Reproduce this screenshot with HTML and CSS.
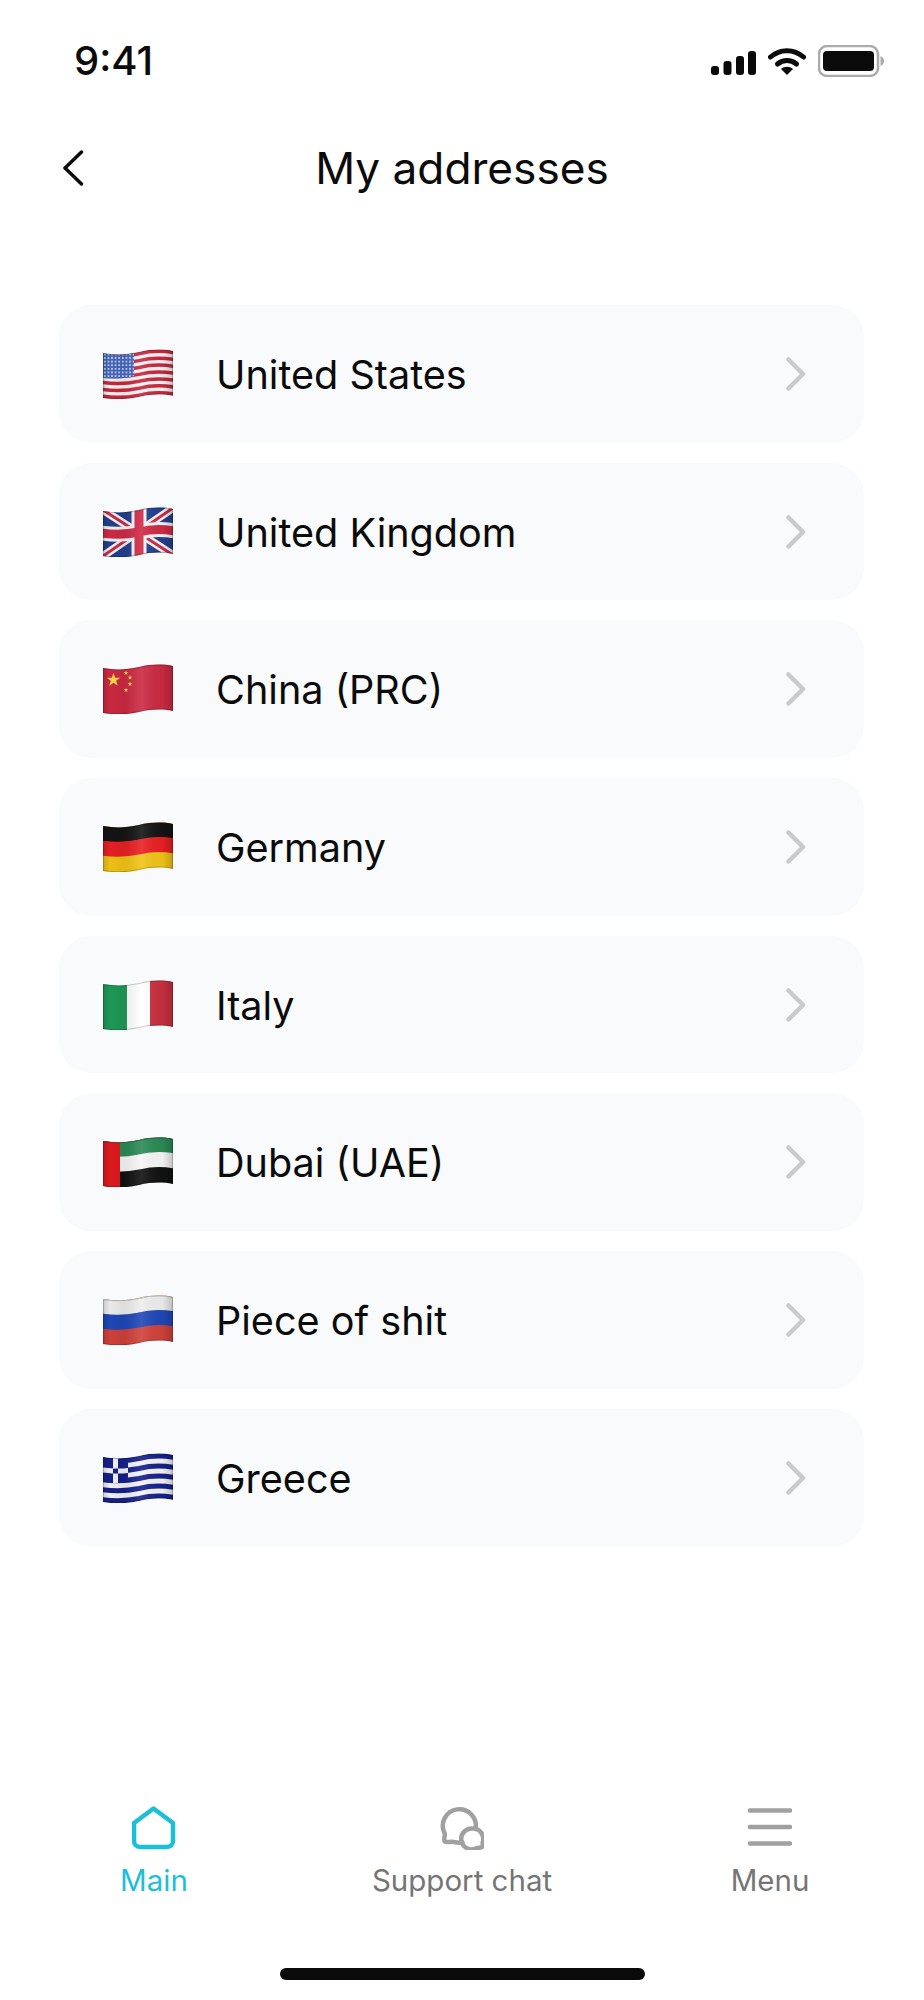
FILE: index.html
```html
<!DOCTYPE html>
<html lang="en">
<head>
  <meta charset="UTF-8">
  <title>My addresses</title>
  <link rel="stylesheet" href="styles.css">
</head>
<body>
  <!-- shared flag pieces -->
  <svg class="defs" aria-hidden="true">
    <defs>
      <clipPath id="flag-shape">
        <path d="M0 4 C12 6 22 6 36 3 C48 0 60 0 70 2 V47 C60 45 48 45 36 48 C22 51 12 51 0 49 Z"/>
      </clipPath>
      <path id="wave" fill="none" d="M-2 4 C12 6 22 6 36 3 C48 0 60 0 72 2"/>
      <path id="edge" fill="none" stroke="#000" stroke-opacity=".2" stroke-width="2" d="M0 4 C12 6 22 6 36 3 C48 0 60 0 70 2 V47 C60 45 48 45 36 48 C22 51 12 51 0 49 Z"/>
      <path id="star" d="M0 -1 L.24 -.31 .95 -.31 .38 .12 .59 .81 0 .4 -.59 .81 -.38 .12 -.95 -.31 -.24 -.31 Z"/>
      <linearGradient id="sheen" x1="0" x2="1" y1="0" y2="0">
        <stop offset="0" stop-color="#000" stop-opacity=".16"/>
        <stop offset=".1" stop-color="#000" stop-opacity=".02"/>
        <stop offset=".3" stop-color="#000" stop-opacity=".07"/>
        <stop offset=".55" stop-color="#fff" stop-opacity=".1"/>
        <stop offset=".85" stop-color="#000" stop-opacity=".03"/>
        <stop offset="1" stop-color="#000" stop-opacity=".2"/>
      </linearGradient>
      <pattern id="us-stars" width="3.600" height="3.600" patternUnits="userSpaceOnUse">
        <circle cx="1.800" cy="1.800" r=".8" fill="#fff"/>
      </pattern>
    </defs>
  </svg>

  <div class="status-bar">
    <span class="time">9:41</span>
    <div class="status-icons">
      <svg class="signal" viewBox="0 0 45 24">
        <rect x="0" y="15" width="8" height="9" rx="3"/>
        <rect x="12.5" y="10" width="8" height="14" rx="3"/>
        <rect x="25" y="5" width="8" height="19" rx="3"/>
        <rect x="37" y="0" width="8" height="24" rx="3"/>
      </svg>
      <svg class="wifi" viewBox="0 0 38 28">
        <path d="M2.5 10 C12 1.5 26 1.5 35.5 10" fill="none" stroke="#0a0a0a" stroke-width="5" stroke-linecap="round"/>
        <path d="M9.5 17 C15 12.2 23 12.2 28.5 17" fill="none" stroke="#0a0a0a" stroke-width="5" stroke-linecap="round"/>
        <path d="M13 22 C16.5 19 21.5 19 25 22 L19 28 Z"/>
      </svg>
      <svg class="battery" viewBox="0 0 66 32">
        <rect x="1" y="1" width="59" height="30" rx="8" fill="none" stroke="#ababab" stroke-width="2.5"/>
        <rect x="5" y="6" width="51" height="20" rx="4"/>
        <path d="M62.500 11 C65 12 66 14 66 16 C66 18 65 20 62.500 21 Z" fill="#ababab"/>
      </svg>
    </div>
  </div>

  <header class="nav">
    <svg class="back" viewBox="0 0 22 36">
      <path d="M19.500 2 L3 18 L19.500 34"/>
    </svg>
    <h1>My addresses</h1>
  </header>

  <main class="list">
    <a class="row">
      <svg class="flag" viewBox="0 0 70 50">
        <g clip-path="url(#flag-shape)">
          <rect width="70" height="50" fill="#f4f4f6"/>
          <use href="#wave" y="1.700" stroke="#c8283c" stroke-width="3.500"/>
          <use href="#wave" y="8.600" stroke="#c8283c" stroke-width="3.500"/>
          <use href="#wave" y="15.500" stroke="#c8283c" stroke-width="3.500"/>
          <use href="#wave" y="22.400" stroke="#c8283c" stroke-width="3.500"/>
          <use href="#wave" y="29.300" stroke="#c8283c" stroke-width="3.500"/>
          <use href="#wave" y="36.200" stroke="#c8283c" stroke-width="3.500"/>
          <use href="#wave" y="43.100" stroke="#c8283c" stroke-width="3.500"/>
          <path d="M0 4 C12 6 22 6 31 4 V27 C20 30 10 30 0 29 Z" fill="#4668c0"/>
          <path d="M0 4 C12 6 22 6 31 4 V27 C20 30 10 30 0 29 Z" fill="url(#us-stars)"/>
          <rect width="70" height="50" fill="url(#sheen)"/>
          <use href="#edge"/>
        </g>
      </svg>
      <span class="name">United States</span>
      <svg class="chevron" viewBox="0 0 20 34"><path d="M2.500 2.500 L17 17 L2.500 31.500"/></svg>
    </a>
    <a class="row">
      <svg class="flag" viewBox="0 0 70 50">
        <g clip-path="url(#flag-shape)">
          <rect width="70" height="50" fill="#23408f"/>
          <path d="M0 3 L70 48 M70 1 L0 49" stroke="#f4f4f6" stroke-width="8"/>
          <path d="M0 3 L70 48 M70 1 L0 49" stroke="#cf2b45" stroke-width="3"/>
          <path d="M36 0 V50" stroke="#f4f4f6" stroke-width="15"/>
          <use href="#wave" y="22" stroke="#f4f4f6" stroke-width="15"/>
          <path d="M36 0 V50" stroke="#cf2b45" stroke-width="9"/>
          <use href="#wave" y="22" stroke="#cf2b45" stroke-width="9"/>
          <rect width="70" height="50" fill="url(#sheen)"/>
          <use href="#edge"/>
        </g>
      </svg>
      <span class="name">United Kingdom</span>
      <svg class="chevron" viewBox="0 0 20 34"><path d="M2.500 2.500 L17 17 L2.500 31.500"/></svg>
    </a>
    <a class="row">
      <svg class="flag" viewBox="0 0 70 50">
        <g clip-path="url(#flag-shape)">
          <rect width="70" height="50" fill="#cc2a42"/>
          <use href="#star" transform="translate(10.500 16) scale(7)" fill="#f8dc4c"/>
          <use href="#star" transform="translate(23 9) scale(2.500)" fill="#f8dc4c"/>
          <use href="#star" transform="translate(27 13.500) scale(2.500)" fill="#f8dc4c"/>
          <use href="#star" transform="translate(27 20) scale(2.500)" fill="#f8dc4c"/>
          <use href="#star" transform="translate(23 26) scale(2.500)" fill="#f8dc4c"/>
          <rect width="70" height="50" fill="url(#sheen)"/>
          <use href="#edge"/>
        </g>
      </svg>
      <span class="name">China (PRC)</span>
      <svg class="chevron" viewBox="0 0 20 34"><path d="M2.500 2.500 L17 17 L2.500 31.500"/></svg>
    </a>
    <a class="row">
      <svg class="flag" viewBox="0 0 70 50">
        <g clip-path="url(#flag-shape)">
          <rect width="70" height="50" fill="#f2c417"/>
          <use href="#wave" y="7" stroke="#141414" stroke-width="16"/>
          <use href="#wave" y="22" stroke="#ea2024" stroke-width="15"/>
          <rect width="70" height="50" fill="url(#sheen)"/>
          <use href="#edge"/>
        </g>
      </svg>
      <span class="name">Germany</span>
      <svg class="chevron" viewBox="0 0 20 34"><path d="M2.500 2.500 L17 17 L2.500 31.500"/></svg>
    </a>
    <a class="row">
      <svg class="flag" viewBox="0 0 70 50">
        <g clip-path="url(#flag-shape)">
          <rect width="24" height="50" fill="#1f9a58"/>
          <rect x="24" width="23" height="50" fill="#ffffff"/>
          <rect x="47" width="23" height="50" fill="#c9303f"/>
          <rect width="70" height="50" fill="url(#sheen)"/>
          <use href="#edge"/>
        </g>
      </svg>
      <span class="name">Italy</span>
      <svg class="chevron" viewBox="0 0 20 34"><path d="M2.500 2.500 L17 17 L2.500 31.500"/></svg>
    </a>
    <a class="row">
      <svg class="flag" viewBox="0 0 70 50">
        <g clip-path="url(#flag-shape)">
          <rect width="70" height="50" fill="#111"/>
          <use href="#wave" y="7" stroke="#2b8a55" stroke-width="16"/>
          <use href="#wave" y="22" stroke="#f6f6f6" stroke-width="15"/>
          <rect width="17" height="50" fill="#e01a1f"/>
          <rect width="70" height="50" fill="url(#sheen)"/>
          <use href="#edge"/>
        </g>
      </svg>
      <span class="name">Dubai (UAE)</span>
      <svg class="chevron" viewBox="0 0 20 34"><path d="M2.500 2.500 L17 17 L2.500 31.500"/></svg>
    </a>
    <a class="row">
      <svg class="flag" viewBox="0 0 70 50">
        <g clip-path="url(#flag-shape)">
          <rect width="70" height="50" fill="#d0423a"/>
          <use href="#wave" y="7" stroke="#eeeeee" stroke-width="16"/>
          <use href="#wave" y="22" stroke="#1f47b8" stroke-width="15"/>
          <rect width="70" height="50" fill="url(#sheen)"/>
          <use href="#edge"/>
        </g>
      </svg>
      <span class="name">Piece of shit</span>
      <svg class="chevron" viewBox="0 0 20 34"><path d="M2.500 2.500 L17 17 L2.500 31.500"/></svg>
    </a>
    <a class="row">
      <svg class="flag" viewBox="0 0 70 50">
        <g clip-path="url(#flag-shape)">
          <rect width="70" height="50" fill="#f4f4f6"/>
          <use href="#wave" y="2.500" stroke="#16208c" stroke-width="5"/>
          <use href="#wave" y="12.500" stroke="#16208c" stroke-width="5"/>
          <use href="#wave" y="22.500" stroke="#16208c" stroke-width="5"/>
          <use href="#wave" y="32.500" stroke="#16208c" stroke-width="5"/>
          <use href="#wave" y="42.500" stroke="#16208c" stroke-width="5"/>
          <path d="M0 4 C8 5.500 16 6 25 5 V29 C16 30 8 30 0 29 Z" fill="#16208c"/>
          <path d="M10 5 V30 H15 V5 Z M0 14.500 C8 15.500 16 16 25 15 V20 C16 21 8 20.500 0 19.500 Z" fill="#f4f4f6"/>
          <rect width="70" height="50" fill="url(#sheen)"/>
          <use href="#edge"/>
        </g>
      </svg>
      <span class="name">Greece</span>
      <svg class="chevron" viewBox="0 0 20 34"><path d="M2.500 2.500 L17 17 L2.500 31.500"/></svg>
    </a>
  </main>

  <nav class="tabs">
    <a class="tab active">
      <svg class="tab-icon" viewBox="0 0 44 44">
        <path d="M21.500 2.500 L41 17 V35 A6 6 0 0 1 35 41 H8 A6 6 0 0 1 2 35 V17 Z"/>
      </svg>
      <span>Main</span>
    </a>
    <a class="tab">
      <svg class="tab-icon" viewBox="0 0 44 44">
        <path d="M35.500 23 A16.500 16.500 0 1 0 4.500 27 C5.500 30 3.500 33 4.500 35 C6.500 37.500 10.500 35 14 36 C16 36.500 19 37 22.500 36.500"/>
        <path d="M33 24 A10.500 10.500 0 1 0 36 44 C38.500 42.500 41 44 42 42.500 C43.500 41 42 38.500 43 37 A10.500 10.500 0 0 0 33 24 Z" transform="translate(0 -1.500)"/>
      </svg>
      <span>Support chat</span>
    </a>
    <a class="tab">
      <svg class="tab-icon" viewBox="0 0 44 44">
        <path d="M2 4.500 H42 M2 21 H42 M2 37.500 H42"/>
      </svg>
      <span>Menu</span>
    </a>
  </nav>

  <div class="home-indicator"></div>
</body>
</html>
```

FILE: styles.css
```css
body {
  margin: 0;
  min-height: 2000px;
  display: flex;
  flex-direction: column;
  background: #fff;
  color: #0b0b0b;
  font-family: Inter, "Noto Sans", sans-serif;
}

.defs { display: block; width: 0; height: 0; }

.status-bar {
  height: 48px;
  padding: 36px 40px 0 74px;
  display: flex;
  justify-content: space-between;
  align-items: center;
}
.time { font-size: 40px; font-weight: 450; }
.status-icons { display: flex; align-items: center; gap: 12px; }
.signal { width: 45px; height: 24px; margin-top: 6px; }
.wifi { width: 38px; height: 28px; margin-top: 1px; }
.battery { width: 66px; height: 32px; margin-top: 1px; }
.status-icons svg { fill: #0a0a0a; }

.nav {
  height: 48px;
  margin-top: 60px;
  padding-left: 62px;
  display: flex;
  align-items: center;
}
.back { width: 22px; height: 36px; fill: none; stroke: #0b0b0b; stroke-width: 3.500; stroke-linecap: round; stroke-linejoin: round; }
.nav h1 {
  margin: 0;
  flex: 1;
  padding-right: 84px;
  text-align: center;
  font-size: 44.200px;
  font-weight: 400;
  line-height: 48px;
}

.list {
  margin-top: 113px;
  padding: 0 60px 0 59px;
  display: flex;
  flex-direction: column;
  gap: 20px;
}
.row {
  height: 137.700px;
  padding: 0 58px 0 44px;
  display: flex;
  align-items: center;
  gap: 43px;
  background: #f8fafc;
  border-radius: 32px;
}
.flag { width: 70px; height: 50px; flex: none; }
.name { flex: 1; font-size: 39.600px; padding-top: 2px; }
.chevron { width: 20px; height: 34px; fill: none; stroke: #c8cacc; stroke-width: 4.500; stroke-linecap: round; stroke-linejoin: round; }

.tabs {
  margin-top: auto;
  display: grid;
  grid-template-columns: repeat(3, 1fr);
}
.tab {
  display: flex;
  flex-direction: column;
  align-items: center;
  gap: 12.500px;
  font-size: 29.500px;
  line-height: 36px;
  color: #757575;
}
.tab-icon { width: 44px; height: 44px; fill: none; stroke: #a0a0a0; stroke-width: 4.500; stroke-linecap: round; stroke-linejoin: round; }
.tab.active { color: #1cbfd8; }
.tab.active .tab-icon { stroke: #1cbfd8; }

.home-indicator {
  width: 365px;
  height: 12px;
  margin: 70px auto 20px;
  background: #0a0a0a;
  border-radius: 6px;
}
```
